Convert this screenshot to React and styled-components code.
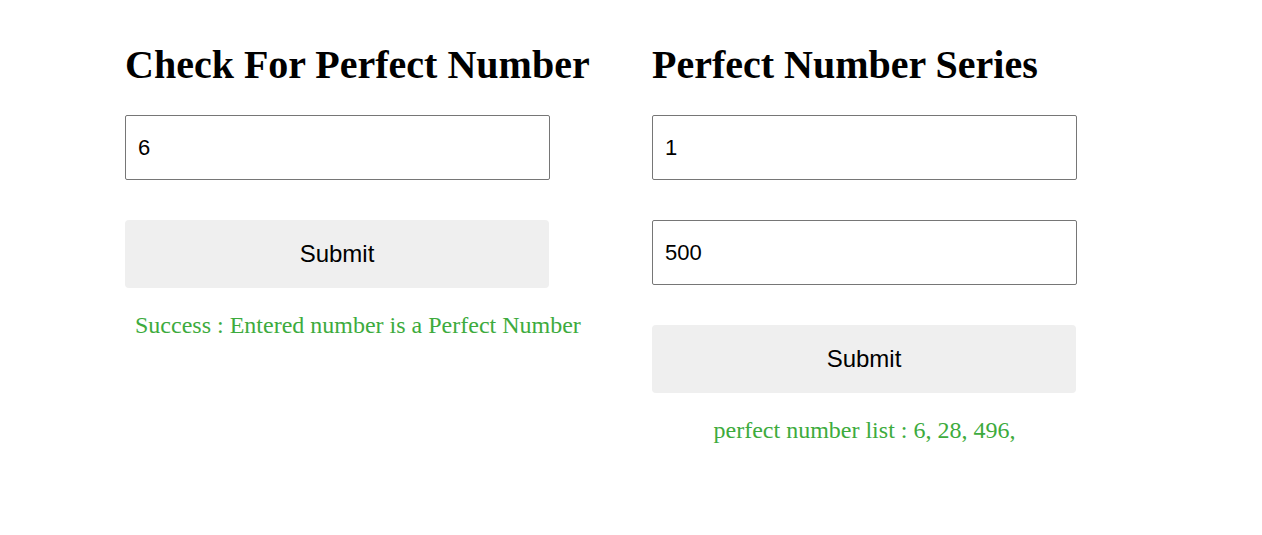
import React from "react";
import styled, { createGlobalStyle } from "styled-components";

const GlobalStyle = createGlobalStyle`
  body {
    margin: 0;
    background: #ffffff;
    font-family: "Liberation Serif", "Times New Roman", serif;
  }
`;

export default function App() {
  return (
    <Page>
      <GlobalStyle />
      <Column>
        <Title>Check For Perfect Number</Title>
        <NumberInput defaultValue="6" />
        <SubmitButton>Submit</SubmitButton>
        <Message>Success : Entered number is a Perfect Number</Message>
      </Column>
      <Column>
        <Title>Perfect Number Series</Title>
        <NumberInput defaultValue="1" />
        <NumberInput defaultValue="500" />
        <SubmitButton>Submit</SubmitButton>
        <Message>perfect number list : 6, 28, 496,</Message>
      </Column>
    </Page>
  );
}

const Page = styled.div`
  display: grid;
  grid-template-columns: 527px 527px;
  padding: 42px 0 0 125px;
`;

const Column = styled.div`
  display: flex;
  flex-direction: column;
  align-items: flex-start;
  gap: 40px;
`;

const Title = styled.h1`
  margin: 0 0 -13px 0;
  font-size: 40px;
  line-height: 46px;
  font-weight: bold;
  white-space: nowrap;
  color: #000;
`;

const NumberInput = styled.input`
  box-sizing: border-box;
  width: 425px;
  height: 65px;
  padding: 0 12px;
  border: 1px solid #767676;
  border-radius: 2px;
  font-family: "Liberation Sans", Arial, sans-serif;
  font-size: 22px;
  color: #000;
  outline: none;
`;

const SubmitButton = styled.button`
  box-sizing: border-box;
  width: 424px;
  height: 68px;
  border: none;
  border-radius: 4px;
  background: #efefef;
  font-family: "Liberation Sans", Arial, sans-serif;
  font-size: 24px;
  color: #000;
`;

const Message = styled.p`
  box-sizing: border-box;
  width: 425px;
  margin: -17px 0 0 0;
  padding: 0 10px;
  text-align: center;
  white-space: nowrap;
  font-size: 24px;
  line-height: 28px;
  color: #3dab3d;
`;
